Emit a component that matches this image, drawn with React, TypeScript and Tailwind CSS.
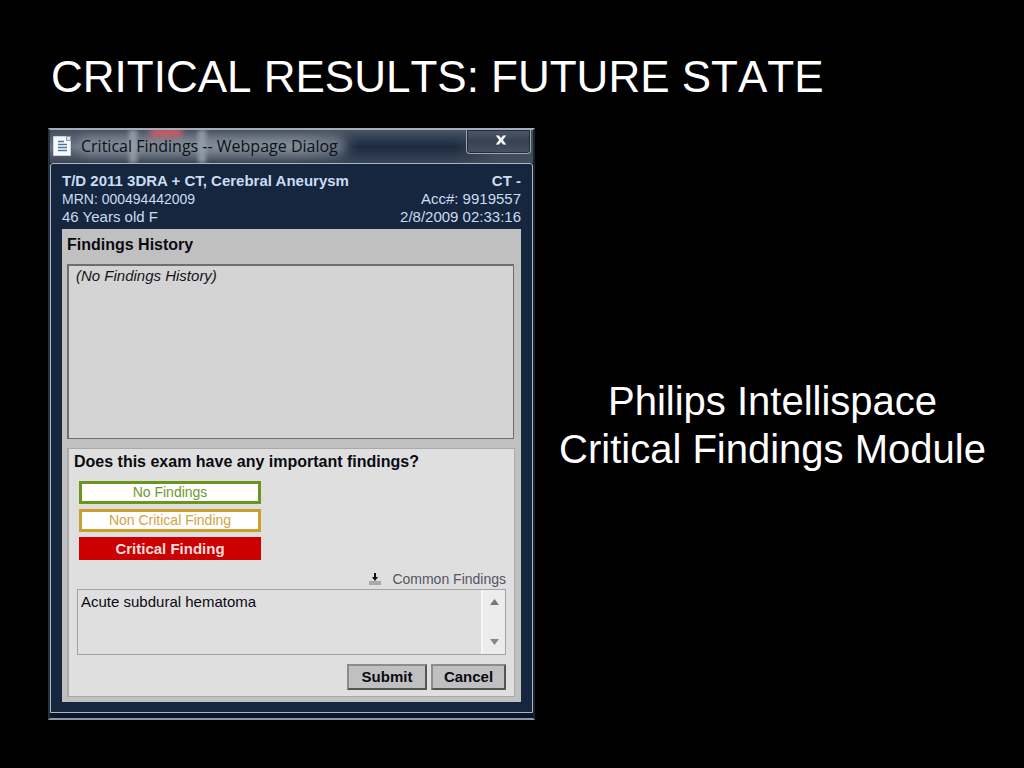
import { useState } from 'react';

const choices = [
  {
    label: 'No Findings',
    className: 'border-[#6b961c] bg-white text-[14px] text-[#6b9a2c]',
  },
  {
    label: 'Non Critical Finding',
    className: 'border-[#c9a02e] bg-white text-[14px] text-[#cfa546]',
  },
  {
    label: 'Critical Finding',
    className: 'border-[#cc0000] bg-[#cc0000] text-[15px] font-bold text-[#f6dcdc]',
  },
];

const PageIcon = () => (
  <svg width="18" height="20" viewBox="0 0 18 20" aria-hidden="true">
    <path d="M0.5 0.5H17.5V19.5H0.5Z" fill="#f7fafc" stroke="#c9d2da" />
    <path d="M13.5 0.5H17.5V4.5H13.5Z" fill="#dfe6ec" stroke="#8a98a6" />
    <path d="M5 5.5H11M5 8.5H14M5 11.5H14M5 14.5H14" stroke="#4f7797" strokeWidth="1.5" />
  </svg>
);

const TitleBar = () => (
  <div className="relative flex h-[33px] items-start justify-between overflow-hidden bg-linear-to-b from-[#4a5564] via-[#1b2a40] to-[#3a4656]">
    {/* Desktop colours showing through the glass */}
    <div className="absolute inset-y-0 left-0 w-[310px] bg-linear-to-b from-[#464f5e] via-[#6b7480] to-[#3b4553] mask-r-from-80%" />
    <div className="absolute inset-y-0 right-0 w-20 bg-[#424d5c] mask-l-from-40%" />
    <div className="absolute -top-1 left-[100px] h-3 w-8 bg-[#c7545f] blur-[3px]" />
    <div className="absolute top-0 left-[79px] h-full w-2 bg-[#8f98a3] blur-[2px]" />
    <div className="absolute top-0 left-[148px] h-full w-2 bg-[#8f98a3] blur-[2px]" />
    <div className="absolute top-[6px] left-7 h-5 w-[268px] rounded-full bg-[#98a2ae]/50 blur-[5px]" />
    <div className="relative flex items-center gap-[10px] pt-[6px] pl-[3px]">
      <PageIcon />
      <h2 className="font-['Open_Sans','Noto_Sans',sans-serif] text-[16px] leading-[20px] whitespace-nowrap text-[#0c1118]">
        Critical Findings -- Webpage Dialog
      </h2>
    </div>
    <button
      type="button"
      aria-label="Close"
      className="relative mr-[2px] flex h-6 w-[65px] items-center justify-center rounded-b-[4px] border border-t-0 border-[#9aa5b2] bg-linear-to-b from-[#4d5968] via-[#364252] to-[#465261] pb-1 pl-1 ring-1 ring-[#232d3a] ring-inset"
    >
      <svg width="14" height="12" viewBox="0 0 14 12" aria-hidden="true">
        <path
          d="M1 1H5L7 3.5L9 1H13L9.3 6L13 11H9L7 8.5L5 11H1L4.7 6Z"
          fill="#f4f6f8"
          stroke="#2b3543"
          strokeWidth="0.7"
        />
      </svg>
    </button>
  </div>
);

const PatientHeader = () => (
  <div className="mb-[3px] flex justify-between text-[15px] leading-[18px] text-[#c9dcf2]">
    <div>
      <p className="font-bold whitespace-nowrap">T/D 2011 3DRA + CT, Cerebral Aneurysm</p>
      <p className="text-[14px]">MRN: 000494442009</p>
      <p>46 Years old F</p>
    </div>
    <div className="text-right whitespace-nowrap">
      <p className="font-bold">CT -</p>
      <p>Acc#: 9919557</p>
      <p>2/8/2009 02:33:16</p>
    </div>
  </div>
);

const FindingsForm = () => {
  const [selected, setSelected] = useState('Critical Finding');
  const [notes, setNotes] = useState('Acute subdural hematoma');

  return (
    <form
      onSubmit={(e) => e.preventDefault()}
      className="mt-[9px] mr-px border border-l-2 border-[#a9a9a9] bg-[#dfdfdf] pt-[3px] pr-2 pb-[6px] pl-2"
    >
      <h3 className="-ml-[3px] text-[16px] leading-[20px] font-bold text-[#0a0a12]">
        Does this exam have any important findings?
      </h3>
      <div className="mt-[9px] ml-[2px] flex w-[182px] flex-col gap-[5px]">
        {choices.map((choice) => (
          <button
            key={choice.label}
            type="button"
            aria-pressed={selected === choice.label}
            onClick={() => setSelected(choice.label)}
            className={`flex h-[23px] items-center justify-center border-[3px] leading-[17px] ${choice.className}`}
          >
            {choice.label}
          </button>
        ))}
      </div>
      <div className="mt-[10px] flex justify-end">
        <button type="button" className="flex items-center gap-[11px] text-[14px] leading-[18px] text-[#55555f]">
          <svg width="12" height="12" viewBox="0 0 12 12" aria-hidden="true">
            <path d="M0 8H12V12H0Z" fill="#a8a8a8" />
            <path d="M5 0H7V4H9L6 8L3 4H5Z" fill="#111" />
          </svg>
          Common Findings
        </button>
      </div>
      <div className="mt-px flex h-[66px] border border-[#a3a3a3]">
        <textarea
          aria-label="Finding notes"
          value={notes}
          onChange={(e) => setNotes(e.target.value)}
          className="min-w-0 flex-1 resize-none overflow-hidden px-[3px] pt-[3px] text-[15px] leading-[18px] text-[#0a0a12] outline-none"
        />
        <div className="flex w-6 flex-col items-center justify-between border-l-2 border-[#f6f6f6] bg-[#ececec] py-[9px]">
          <button type="button" aria-label="Scroll up">
            <svg width="9" height="6" viewBox="0 0 9 6" className="block" aria-hidden="true">
              <path d="M4.5 0L9 6H0Z" fill="#777" />
            </svg>
          </button>
          <button type="button" aria-label="Scroll down">
            <svg width="9" height="6" viewBox="0 0 9 6" className="block" aria-hidden="true">
              <path d="M0 0H9L4.5 6Z" fill="#888" />
            </svg>
          </button>
        </div>
      </div>
      <div className="mt-[9px] flex justify-end gap-1 text-[15px] leading-[20px] font-bold text-[#0a0a12]">
        <button type="submit" className="h-[26px] w-20 border-2 border-t-[#8c8c8c] border-r-[#555] border-b-[#555] border-l-[#8c8c8c] bg-[#c0c0c0]">
          Submit
        </button>
        <button type="button" className="h-[26px] w-[75px] border-2 border-t-[#8c8c8c] border-r-[#555] border-b-[#555] border-l-[#8c8c8c] bg-[#c0c0c0]">
          Cancel
        </button>
      </div>
    </form>
  );
};

const FindingsDialog = () => (
  <section className="border-2 border-t-[#a4adb8] border-r-[#17222f] border-b-[#8d98a6] border-l-[#27323f] bg-[#0b1728]">
    <TitleBar />
    <div className="mb-[5px] rounded-t-[3px] border border-[#a9b6c6] bg-[#16263f] px-[11px] pt-2 pb-[10px]">
      <PatientHeader />
      <div className="bg-[#c0c0c0] px-[5px] pb-[5px]">
        <h3 className="pt-[6px] pb-[9px] text-[16px] leading-[20px] font-bold text-[#0a0a12]">Findings History</h3>
        <div className="mr-[2px] h-[175px] border border-t-2 border-l-2 border-[#6e6e6e] bg-[#d4d4d4] px-[7px] pt-px text-[15px] leading-[18px] text-[#15151c] italic">
          (No Findings History)
        </div>
        <FindingsForm />
      </div>
    </div>
  </section>
);

const App = () => {
  return (
    <main className="min-h-screen bg-black pt-[53px] pb-12 font-['Liberation_Sans',Arial,sans-serif] text-white">
      <h1 className="pl-[51px] text-[44px] leading-[48px] [font-kerning:none]">CRITICAL RESULTS: FUTURE STATE</h1>
      <div className="mt-[27px] grid grid-cols-[487fr_475fr] items-center pr-[14px] pl-12">
        <FindingsDialog />
        <p className="pt-[2px] text-center text-[40px] leading-[48px]">
          Philips Intellispace
          <br />
          Critical Findings Module
        </p>
      </div>
    </main>
  );
};

export default App;
